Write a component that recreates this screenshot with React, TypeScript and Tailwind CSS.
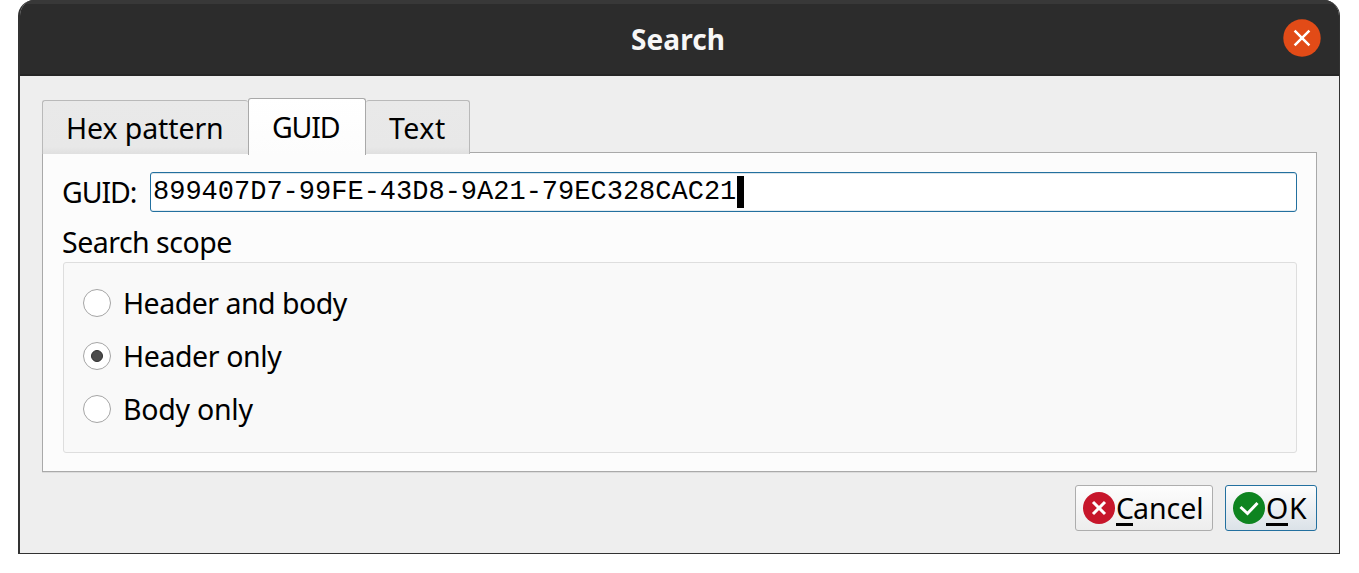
import React, { useState } from "react";

const tabBase =
  "relative flex shrink-0 whitespace-nowrap rounded-t-[3px] border border-b-0 leading-[38px]";
const tabIdle =
  "h-[54px] border-[#b9b9b9] bg-[linear-gradient(#e9e9e9_0,#e8e8e8_46px,#dedede_54px)] pt-2";
const tabActive = "h-[57px] border-[#a9a9a9] bg-[linear-gradient(#ffffff,#fcfcfc)] pt-[9px]";

const tabs = [
  { name: "Hex pattern", size: "w-[206px] border-r-0 pl-[23px] tracking-[-0.1px]" },
  { name: "GUID", size: "w-[118px] pl-[23px] tracking-[-1.2px]" },
  { name: "Text", size: "w-[104px] border-l-0 pl-[23px] tracking-[0.5px]" },
];

const scopes = [
  { name: "Header and body", spacing: "tracking-[-0.5px]" },
  { name: "Header only", spacing: "tracking-[-0.4px]" },
  { name: "Body only", spacing: "tracking-[-0.25px]" },
];

export default function App() {
  const [tab, setTab] = useState("GUID");
  const [scope, setScope] = useState("Header only");

  return (
    <div className="h-[573px] w-[1359px] overflow-hidden bg-white pl-[18px] font-['Noto_Sans',sans-serif] text-[28.5px] leading-[38px] text-black">
      <div className="flex h-[554px] w-[1322px] flex-col overflow-hidden rounded-t-[16px] border-r border-b border-l-2 border-[#323232] bg-[#eeeeee]">
        <header className="relative flex h-[76px] shrink-0 justify-center border-t-4 border-b-2 border-t-[#383838] border-b-[#252525] bg-[#2c2c2c] pt-4">
          <h1 className="mr-[3px] text-[28px] font-bold tracking-[0.1px] text-[#f7f7f7]">Search</h1>
          <button
            aria-label="Close"
            className="absolute top-[15px] right-[18px] size-[38px] rounded-full"
          >
            <svg viewBox="0 0 38 38" className="size-[38px]">
              <circle cx="19" cy="19" r="18.7" fill="#e24b17" />
              <path d="M11.6 11.6 26.4 26.4M26.4 11.6 11.6 26.4" stroke="#fff" strokeWidth="2.5" />
            </svg>
          </button>
        </header>

        <main className="flex flex-1 flex-col pt-[22px] pr-[22px] pl-[22px]">
          <div className="relative z-10 flex h-[57px] items-start" role="tablist">
            {tabs.map((t) => (
              <button
                key={t.name}
                role="tab"
                aria-selected={tab === t.name}
                onClick={() => setTab(t.name)}
                className={`${tabBase} ${t.size} ${tab === t.name ? tabActive : "mt-[2px] " + tabIdle}`}
              >
                {t.name}
              </button>
            ))}
          </div>

          <section className="-mt-[3px] flex h-[320px] flex-col border border-[#a9a9a9] bg-[#fcfcfc] px-[19px] pt-[19px] shadow-[0_1px_0_#dcdcdc]">
            <div className="flex h-10">
              <label className="w-[88px] pt-px tracking-[-1.1px]">GUID:</label>
              <div className="flex flex-1 rounded-[3px] border border-[#23709f] bg-white pl-[2px] font-['Liberation_Mono',monospace] text-[27px] shadow-[inset_0_1px_0_#d9e4ea,inset_0_-1px_0_#e4ecf0]">
                <span>899407D7-99FE-43D8-9A21-79EC328CAC21</span>
                <span className="mt-[3px] ml-px h-8 w-[7px] bg-black" />
              </div>
            </div>
            <h2 className="mt-[11px] h-[39px] tracking-[-0.5px]">Search scope</h2>
            <div className="ml-px flex h-[191px] flex-col rounded-[3px] border border-[#dedede] bg-[#f9f9f9] pt-[14px] pl-[19px]">
              {scopes.map((s) => (
                <label key={s.name} className="flex h-[53px] items-start pt-[7px]">
                  <input
                    type="radio"
                    name="scope"
                    className="sr-only"
                    checked={scope === s.name}
                    onChange={() => setScope(s.name)}
                  />
                  <span className="mt-[5px] flex size-7 items-center justify-center rounded-full border border-[#a5a5a5] bg-white">
                    {scope === s.name && (
                      <span className="size-3 rounded-full border border-[#303030] bg-[#4c4c4c]" />
                    )}
                  </span>
                  <span className={`ml-3 ${s.spacing}`}>{s.name}</span>
                </label>
              ))}
            </div>
          </section>

          <footer className="mt-[13px] flex justify-end gap-3">
            <button className="flex h-[46px] w-[138px] rounded-[3px] border border-[#adadad] bg-[linear-gradient(#fdfdfd,#ededed)] pl-[7px]">
              <svg viewBox="0 0 32 32" className="mt-[6px] size-8 shrink-0">
                <circle cx="16" cy="16" r="16" fill="#c7162b" />
                <path d="m10 10 12 12M22 10 10 22" stroke="#fff" strokeWidth="3" />
              </svg>
              <span className="mt-[3px] ml-px flex tracking-[0px]">
                <span className="h-[37px] w-[17px] border-b-3 border-black">C</span>
                <span>ancel</span>
              </span>
            </button>
            <button className="flex h-[46px] w-[92px] rounded-[3px] border border-[#23709f] bg-[linear-gradient(#fdfdfd,#dbe2e8)] pl-[7px]">
              <svg viewBox="0 0 32 32" className="mt-[6px] size-8 shrink-0">
                <circle cx="16" cy="16" r="16" fill="#0e8420" />
                <path d="m7.5 15 7 6.5L24.5 11" stroke="#fff" strokeWidth="3" fill="none" />
              </svg>
              <span className="mt-[3px] ml-px flex tracking-[0px]">
                <span className="h-[37px] w-[22px] border-b-3 border-black">O</span>
                <span className="ml-px">K</span>
              </span>
            </button>
          </footer>
        </main>
      </div>
    </div>
  );
}
